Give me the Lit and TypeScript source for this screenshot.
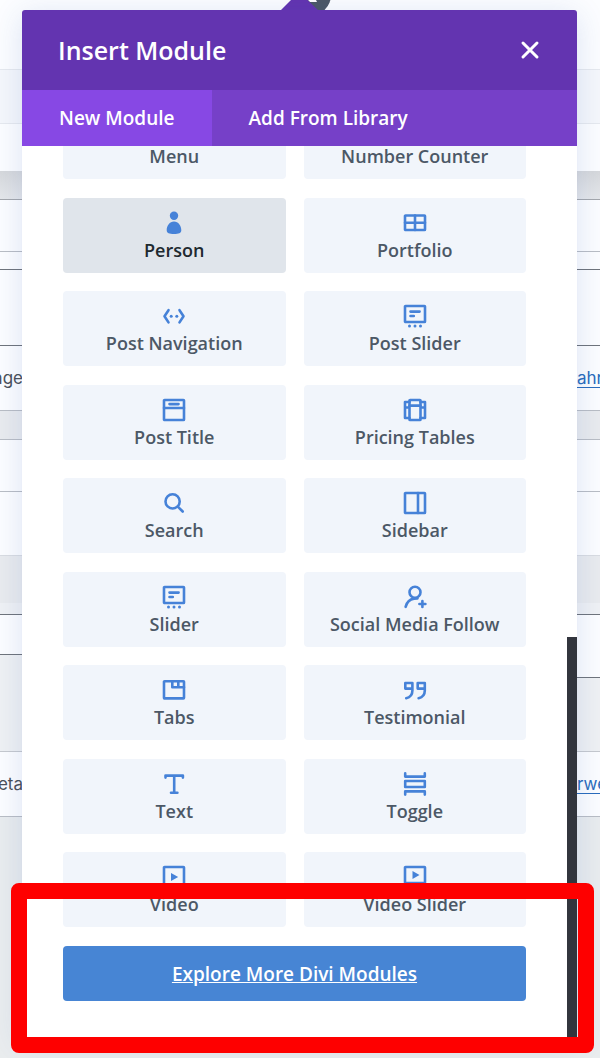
import { LitElement, html, css, svg, nothing } from "lit";
import { customElement, property, state } from "lit/decorators.js";

const slide = svg`
  <rect x="2" y="2" width="20" height="16" rx="0.6" />
  <path d="M7.5 7.6H16.6M7.5 12H10.8" />
  <g class="solid"><circle cx="6.5" cy="22" r="1.5" /><circle cx="12" cy="22" r="1.5" /><circle cx="17.5" cy="22" r="1.5" /></g>`;

const icons: Record<string, unknown> = {
  person: svg`<g class="solid"><circle cx="12" cy="4.7" r="4.2" />
    <path d="M12 10.6c-4.3 0-7.3 4.3-7.3 8.6 0 2.700 2.600 3.800 7.300 3.800s7.300-1.100 7.300-3.800c0-4.300-3-8.600-7.300-8.600z" /></g>`,
  portfolio: svg`<rect x="2" y="4.5" width="20" height="14.5" rx="0.6" /><path d="M2 11.8H22M12 4.5V19" />`,
  "post-navigation": svg`<path d="M6.500 6.200 2.500 12.200 6.500 18.400M17.500 6.200 21.500 12.200 17.500 18.400" />
    <g class="solid"><circle cx="9.200" cy="12.200" r="1.500" /><circle cx="14.800" cy="12.200" r="1.500" /></g>`,
  "post-slider": slide,
  slider: slide,
  "post-title": svg`<rect x="2" y="2" width="20" height="20" rx="0.6" /><path d="M2 10H22M7.5 6.1H16.5" />`,
  "pricing-tables": svg`<rect x="6.5" y="2" width="11" height="20" rx="0.6" />
    <path d="M6.5 4H2V20H6.5M17.5 4H22V20H17.5M2 9.5H5M22 9.5H19M6.5 7.6H17.5" />`,
  search: svg`<circle cx="10.6" cy="10.4" r="7.1" /><path d="M15.8 15.6 20.7 20.5" />`,
  sidebar: svg`<rect x="2" y="2" width="20" height="20" rx="0.6" /><path d="M15 2V22" />`,
  "social-media-follow": svg`<circle cx="12" cy="7.2" r="5.5" />
    <path d="M2.6 21.8C3.8 17.2 6.8 14.3 11 13.6L14.5 13.400M19.400 16V22M16.400 19H22.400" />`,
  tabs: svg`<rect x="2" y="3.2" width="20" height="17.2" rx="0.6" /><path d="M10.3 3.2V9.2H22M16.3 3.2V9.2" />`,
  testimonial: svg`<path d="M9.4 10.600H2.300V5H9.400V12.500C9.400 16.500 7.200 19.300 3.200 20.300M21.800 10.600H14.700V5H21.800V12.500C21.800 16.500 19.600 19.300 15.600 20.300" />`,
  text: svg`<path d="M3.500 5.600V3.600H20.900V5.600M12.200 3.600V20.800M9 20.800H15.400" />`,
  toggle: svg`<path d="M2.200 1.400V4.600H21.800V1.400M2.200 22.600V19.400H21.800V22.600" /><rect x="2.200" y="9" width="19.600" height="6" />`,
  video: svg`<rect x="2" y="2" width="20" height="20" rx="0.6" /><path class="solid" d="M9 8 16.200 12 9 16z" />`,
  "video-slider": svg`<rect x="2" y="2" width="20" height="16" rx="0.6" /><path class="solid" d="M9.500 6 16.500 10 9.500 14z" />
    <g class="solid"><circle cx="6.500" cy="22" r="1.500" /><circle cx="12" cy="22" r="1.500" /><circle cx="17.500" cy="22" r="1.500" /></g>`,
  menu: svg`<path d="M3 6H21M3 12H21M3 18H21" />`,
  "number-counter": svg`<path d="M4 4V20M10 4V20M16 4V20M2 12H22" />`,
};

const modules = [
  "Menu", "Number Counter", "Person", "Portfolio", "Post Navigation", "Post Slider",
  "Post Title", "Pricing Tables", "Search", "Sidebar", "Slider", "Social Media Follow",
  "Tabs", "Testimonial", "Text", "Toggle", "Video", "Video Slider",
];

@customElement("module-card")
class ModuleCard extends LitElement {
  @property() name = "";
  @property({ type: Boolean }) active = false;

  static styles = css`
    :host { display: block; }
    .card {
      width: 100%;
      height: 100%;
      display: flex;
      flex-direction: column;
      align-items: center;
      gap: 3px;
      padding: 13px 4px 0;
      border: 0;
      border-radius: 4px;
      background: #f1f5fb;
      color: #4c5866;
      font: 600 18px/24px "Open Sans", sans-serif;
      white-space: nowrap;
      cursor: pointer;
      box-sizing: border-box;
    }
    .card.active { background: #e0e5eb; color: #20292f; }
    .icon {
      width: 24px;
      height: 24px;
      flex: none;
      fill: none;
      stroke: #4682d8;
      stroke-width: 2.6;
      stroke-linecap: round;
      stroke-linejoin: round;
      overflow: visible;
    }
    .solid { fill: #4682d8; stroke: none; }
  `;

  render() {
    const key = this.name.toLowerCase().replace(/ /g, "-");
    return html`<button class="card ${this.active ? "active" : ""}" type="button">
      <svg class="icon" viewBox="0 0 24 24" aria-hidden="true">${icons[key]}</svg>
      <span>${this.name}</span>
    </button>`;
  }
}

interface Band { kind: string; text?: string; link?: string }

const bands: Band[] = [
  { kind: "top" }, { kind: "strip" }, { kind: "bar" }, { kind: "shade" },
  { kind: "field" }, { kind: "space" }, { kind: "area" },
  { kind: "line", text: "nge", link: "ahr" }, { kind: "gap" }, { kind: "field" },
  { kind: "panel" }, { kind: "wide" }, { kind: "pale" }, { kind: "input" }, { kind: "rest" },
  { kind: "line", text: "eta", link: "rwe" }, { kind: "end" },
];

@customElement("page-backdrop")
class PageBackdrop extends LitElement {
  static styles = css`
    :host {
      display: flex;
      flex-direction: column;
      font: 17px/24px Inter, "Liberation Sans", sans-serif;
      color: #4a5058;
      overflow: hidden;
    }
    .band {
      flex: none;
      display: flex;
      align-items: center;
      justify-content: space-between;
      box-sizing: border-box;
      background: #fcfdff;
      border-bottom: 1px solid #b9bdc4;
    }
    .top { height: 70px; border-color: #e6e9ee; }
    .strip { height: 54px; background: #f5f7fb; border-color: #e6e9ee; }
    .bar { height: 47px; border: 0; }
    .shade { height: 29px; background: linear-gradient(#d6d8db, #e5e7ea); border-color: #a4a7ac; }
    .field { height: 52px; }
    .space { height: 18px; border-color: #6f747b; }
    .area { height: 76px; border-color: #6f747b; }
    .line { height: 65px; }
    .gap { height: 29px; background: #e9ebee; }
    .panel { height: 64px; border-color: #d9dce1; }
    .wide { height: 47px; background: #e9ebee; border: 0; }
    .pale { height: 12px; background: #eff1f4; border-color: #6f747b; }
    .input { height: 40px; border: 0; align-items: flex-start; background: none; }
    .half { width: 50%; height: 40px; background: #fcfdff; border-bottom: 1px solid #6f747b; box-sizing: border-box; }
    .half.tall { height: 63px; position: relative; }
    .rest { height: 97px; background: #eff1f3; border-color: #c6c9ce; }
    .end { flex: 1; background: #e9ecee; border: 0; }
    .text { display: flex; justify-content: flex-end; width: 23px; }
    a { color: #2a6cbc; text-underline-offset: 3px; width: 23px; }
  `;

  render() {
    return bands.map((b) => html`<div class="band ${b.kind}">
      ${b.kind === "input" ? html`<div class="half"></div><div class="half tall"></div>` : nothing}
      ${b.text ? html`<span class="text">${b.text}</span><a href="#">${b.link}</a>` : nothing}
    </div>`);
  }
}

@customElement("app-root")
class AppRoot extends LitElement {
  @state() tab = 0;

  static styles = css`
    :host {
      display: flex;
      flex-direction: column;
      position: relative;
      height: 100vh;
      min-height: 600px;
      padding: 10px 23px 21px 22px;
      box-sizing: border-box;
      overflow: hidden;
      font-family: "Open Sans", sans-serif;
    }
    .backdrop { position: absolute; inset: 0; }
    .pointer { position: absolute; top: 0; left: 50%; margin-left: -20px; width: 60px; height: 11px; }
    .modal {
      position: relative;
      flex: 1;
      min-height: 0;
      display: flex;
      flex-direction: column;
      background: #fff;
      border-radius: 3px;
      box-shadow: 0 5px 30px rgba(43, 90, 180, 0.16);
    }
    .header {
      display: flex;
      align-items: center;
      justify-content: space-between;
      height: 80px;
      padding: 0 36px;
      background: #6334b0;
      color: #fff;
      border-radius: 3px 3px 0 0;
      box-sizing: border-box;
    }
    .title { margin: 0; font-size: 25px; line-height: 32px; font-weight: 600; }
    .close { width: 22px; height: 22px; padding: 0; border: 0; background: none; cursor: pointer; }
    .close svg { display: block; width: 22px; height: 22px; stroke: #fff; stroke-width: 3; stroke-linecap: round; }
    .tabs { display: flex; background: #7640c8; }
    .tab {
      height: 56px;
      padding: 0 37px;
      border: 0;
      background: none;
      color: #fff;
      font: 600 19px/24px "Open Sans", sans-serif;
      white-space: nowrap;
      cursor: pointer;
    }
    .tab.current { background: #8748e4; }
    .body {
      position: relative;
      flex: 1;
      min-height: 0;
      display: flex;
      flex-direction: column;
      gap: 19px;
      padding: 0 51px 36px 41px;
      overflow: hidden;
    }
    .grid {
      flex: 1;
      min-height: 0;
      margin-top: -42px;
      display: grid;
      grid-template-columns: 1fr 1fr;
      grid-auto-rows: 75px;
      column-gap: 18px;
      align-content: space-between;
    }
    .more {
      flex: none;
      height: 55px;
      display: flex;
      align-items: center;
      justify-content: center;
      border-radius: 4px;
      background: #4785d4;
      color: #fff;
      font-size: 19px;
      line-height: 24px;
      font-weight: 600;
    }
    .thumb { position: absolute; right: 0; bottom: 0; width: 10px; height: 400px; background: #32353d; }
    .highlight {
      position: absolute;
      left: 11px;
      right: 6px;
      bottom: 5px;
      height: 170px;
      border: 16px solid #fe0000;
      border-radius: 8px;
      box-sizing: border-box;
      pointer-events: none;
    }
  `;

  render() {
    return html`
      <page-backdrop class="backdrop"></page-backdrop>
      <svg class="pointer" viewBox="0 0 60 11" aria-hidden="true">
        <circle cx="31" cy="-5" r="20" fill="#4c5866" />
        <path d="M28 0H36L37 2H30z" fill="#fff" />
        <path d="M0 11 19-8 39 11z" fill="#6334b0" />
      </svg>
      <section class="modal" role="dialog" aria-labelledby="title">
        <header class="header">
          <h1 class="title" id="title">Insert Module</h1>
          <button class="close" type="button" aria-label="Close">
            <svg viewBox="0 0 22 22"><path d="M4 4 18 18M18 4 4 18" /></svg>
          </button>
        </header>
        <nav class="tabs">
          ${["New Module", "Add From Library"].map((label, i) => html`
            <button type="button" class="tab ${this.tab === i ? "current" : ""}" @click=${() => (this.tab = i)}>${label}</button>`)}
        </nav>
        <div class="body">
          <div class="grid">
            ${modules.map((m) => html`<module-card .name=${m} ?active=${m === "Person"}></module-card>`)}
          </div>
          <a class="more" href="#">Explore More Divi Modules</a>
          <div class="thumb"></div>
        </div>
      </section>
      <div class="highlight"></div>
    `;
  }
}
